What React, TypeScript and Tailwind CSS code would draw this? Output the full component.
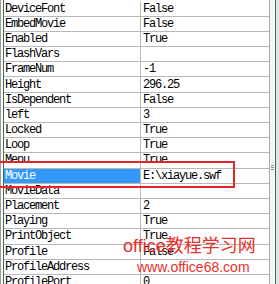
const rows: [string, string][] = [
  ['DeviceFont', 'False'],
  ['EmbedMovie', 'False'],
  ['Enabled', 'True'],
  ['FlashVars', ''],
  ['FrameNum', '-1'],
  ['Height', '296.25'],
  ['IsDependent', 'False'],
  ['left', '3'],
  ['Locked', 'True'],
  ['Loop', 'True'],
  ['Menu', 'True'],
  ['Movie', 'E:\\xiayue.swf'],
  ['MovieData', ''],
  ['Placement', '2'],
  ['Playing', 'True'],
  ['PrintObject', 'True'],
  ['Profile', 'False'],
  ['ProfileAddress', ''],
  ['ProfilePort', '0'],
];

export default function App() {
  return (
    <div className="relative flex w-[279px] h-[284px] overflow-hidden bg-white text-black font-['Liberation_Mono',monospace] text-[12px] tracking-[-1.2px]">
      <div className="w-px shrink-0 bg-[#9c9c9c]" />
      <div className="w-[2px] shrink-0 bg-white" />
      <div className="w-px shrink-0 bg-[#3c6e4a]" />

      <div className="w-[266px] shrink-0 pt-[1.5px] border-r border-[#a8a8a8]">
        {rows.map(([name, value]) => {
          const selected = name === 'Movie';
          return (
            <div key={name} className="flex h-[15.2px] border-b border-[#b8b8b8]">
              <div className="w-[137px] shrink-0 border-r border-[#b8b8b8] flex items-center">
                <div className={`h-full w-full flex items-center pl-px whitespace-nowrap ${selected ? 'bg-[#3399ff] text-white' : ''}`}>
                  {name}
                </div>
              </div>
              <div className="flex-1 flex items-center pl-[2px] whitespace-nowrap">{value}</div>
            </div>
          );
        })}
      </div>

      <div className="w-[5px] shrink-0 bg-[#f6f6f6] flex flex-col items-center pt-[165px] gap-px">
        <div className="w-[3px] h-px bg-[#8a8a8a]" />
        <div className="w-[3px] h-px bg-[#8a8a8a]" />
        <div className="w-[3px] h-px bg-[#8a8a8a]" />
      </div>
      <div className="w-px shrink-0 bg-[#3c6e4a]" />
      <div className="w-[3px] shrink-0 bg-[#e4e4e4]" />

      {/* highlight box around the Movie row */}
      <div className="absolute left-[-2px] top-[161px] w-[237px] h-[27px] border-2 border-[#e3242b]" />

      {/* watermark */}
      <div className="absolute left-[123px] top-[237px] text-[18px] leading-none tracking-normal text-[#e8302a] font-['Liberation_Sans','Noto_Sans_CJK_SC',sans-serif] whitespace-nowrap">
        office教程学习网
      </div>
      <div className="absolute left-[137px] top-[260px] text-[14px] leading-none tracking-normal text-[#e8302a] font-['Liberation_Sans',sans-serif] whitespace-nowrap">
        www.office68.com
      </div>
    </div>
  );
}
